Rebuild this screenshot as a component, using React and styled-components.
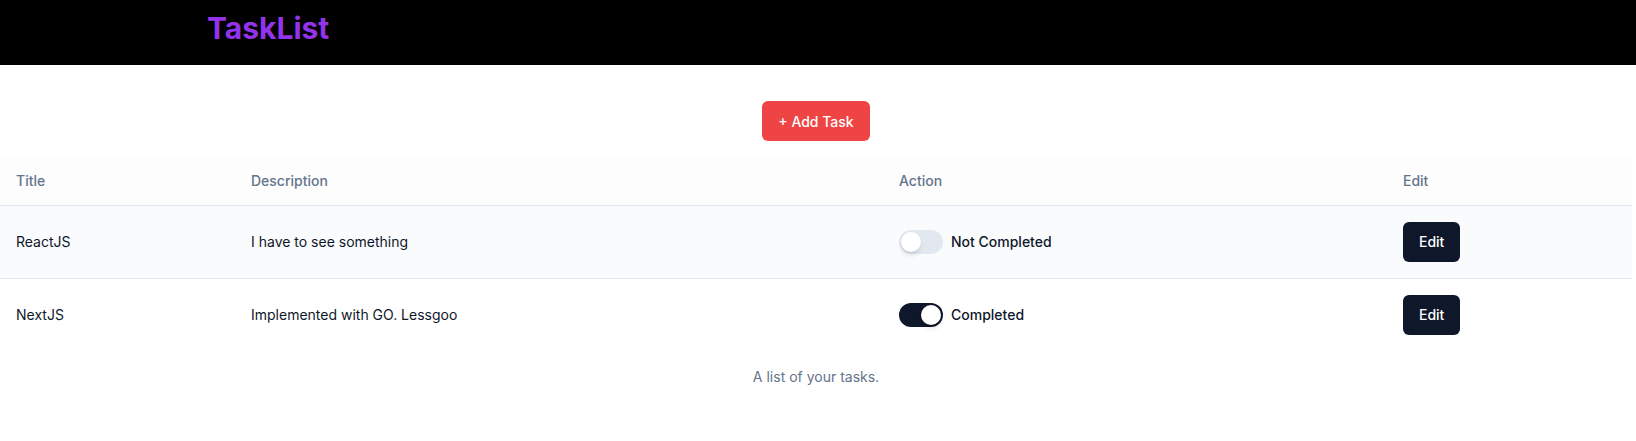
import React, { useState } from "react";
import styled, { createGlobalStyle } from "styled-components";

const GlobalStyle = createGlobalStyle`
  * { box-sizing: border-box; }
  body {
    margin: 0;
    background: #ffffff;
    font-family: Inter, "Noto Sans", sans-serif;
    color: #0f172a;
  }
`;

const initialTasks = [
  { id: 1, title: "ReactJS", description: "I have to see something", done: false },
  { id: 2, title: "NextJS", description: "Implemented with GO. Lessgoo", done: true },
];

function App() {
  const [tasks, setTasks] = useState(initialTasks);

  const toggle = (id) => {
    setTasks((prev) => prev.map((t) => (t.id === id ? { ...t, done: !t.done } : t)));
  };

  return (
    <>
      <GlobalStyle />
      <NavBar>
        <Brand>TaskList</Brand>
      </NavBar>
      <Main>
        <Toolbar>
          <AddButton>+ Add Task</AddButton>
        </Toolbar>
        <Table>
          <colgroup>
            <col style={{ width: 235 }} />
            <col style={{ width: 648 }} />
            <col style={{ width: 504 }} />
            <col style={{ width: 245 }} />
          </colgroup>
          <thead>
            <HeadRow>
              <Th>Title</Th>
              <Th>Description</Th>
              <Th>Action</Th>
              <Th>Edit</Th>
            </HeadRow>
          </thead>
          <tbody>
            {tasks.map((task, i) => (
              <Row key={task.id} $highlight={i === 0} $last={i === tasks.length - 1}>
                <Td>{task.title}</Td>
                <Td>{task.description}</Td>
                <Td>
                  <SwitchWrap>
                    <Switch $on={task.done} onClick={() => toggle(task.id)}>
                      <Thumb $on={task.done} />
                    </Switch>
                    <SwitchLabel>{task.done ? "Completed" : "Not Completed"}</SwitchLabel>
                  </SwitchWrap>
                </Td>
                <Td>
                  <EditButton>Edit</EditButton>
                </Td>
              </Row>
            ))}
          </tbody>
        </Table>
        <Caption>A list of your tasks.</Caption>
      </Main>
    </>
  );
}

const NavBar = styled.header`
  height: 65px;
  background: #000000;
  padding: 10px 0 0 207px;
`;

const Brand = styled.h1`
  margin: 0;
  font-size: 30px;
  line-height: 36px;
  font-weight: 700;
  color: #9333ea;
`;

const Main = styled.main`
  width: 1632px;
`;

const Toolbar = styled.div`
  display: flex;
  justify-content: center;
  padding: 36px 0 16px;
`;

const AddButton = styled.button`
  height: 40px;
  padding: 0 16px;
  border: none;
  border-radius: 6px;
  background: #ef4444;
  color: #ffffff;
  font-family: inherit;
  font-size: 14px;
  font-weight: 500;
  cursor: pointer;
`;

const Table = styled.table`
  width: 1632px;
  border-collapse: collapse;
  table-layout: fixed;
  font-size: 14px;
`;

const HeadRow = styled.tr`
  background: #fdfdfe;
  border-bottom: 1px solid #e2e8f0;
`;

const Th = styled.th`
  height: 48px;
  padding: 0 16px;
  text-align: left;
  font-weight: 500;
  color: #64748b;
`;

const Row = styled.tr`
  background: ${(p) => (p.$highlight ? "#fafbfd" : "#ffffff")};
  border-bottom: ${(p) => (p.$last ? "none" : "1px solid #e2e8f0")};
`;

const Td = styled.td`
  padding: 16px;
  vertical-align: middle;
  color: #0f172a;
`;

const SwitchWrap = styled.div`
  display: flex;
  align-items: center;
  gap: 8px;
`;

const Switch = styled.button`
  width: 44px;
  height: 24px;
  padding: 0;
  border: 2px solid transparent;
  border-radius: 999px;
  background: ${(p) => (p.$on ? "#0f172a" : "#e2e8f0")};
  display: inline-flex;
  align-items: center;
  cursor: pointer;
`;

const Thumb = styled.span`
  display: block;
  width: 20px;
  height: 20px;
  border-radius: 50%;
  background: #ffffff;
  box-shadow: 0 4px 6px -1px rgba(0, 0, 0, 0.1), 0 2px 4px -2px rgba(0, 0, 0, 0.1);
  transform: translateX(${(p) => (p.$on ? "20px" : "0")});
`;

const SwitchLabel = styled.span`
  font-weight: 500;
  color: #0f172a;
`;

const EditButton = styled.button`
  height: 40px;
  padding: 0 16px;
  border: none;
  border-radius: 6px;
  background: #0f172a;
  color: #ffffff;
  font-family: inherit;
  font-size: 14px;
  font-weight: 500;
  cursor: pointer;
`;

const Caption = styled.p`
  margin: 16px 0 0;
  text-align: center;
  font-size: 14px;
  line-height: 20px;
  color: #64748b;
`;

export default App;
